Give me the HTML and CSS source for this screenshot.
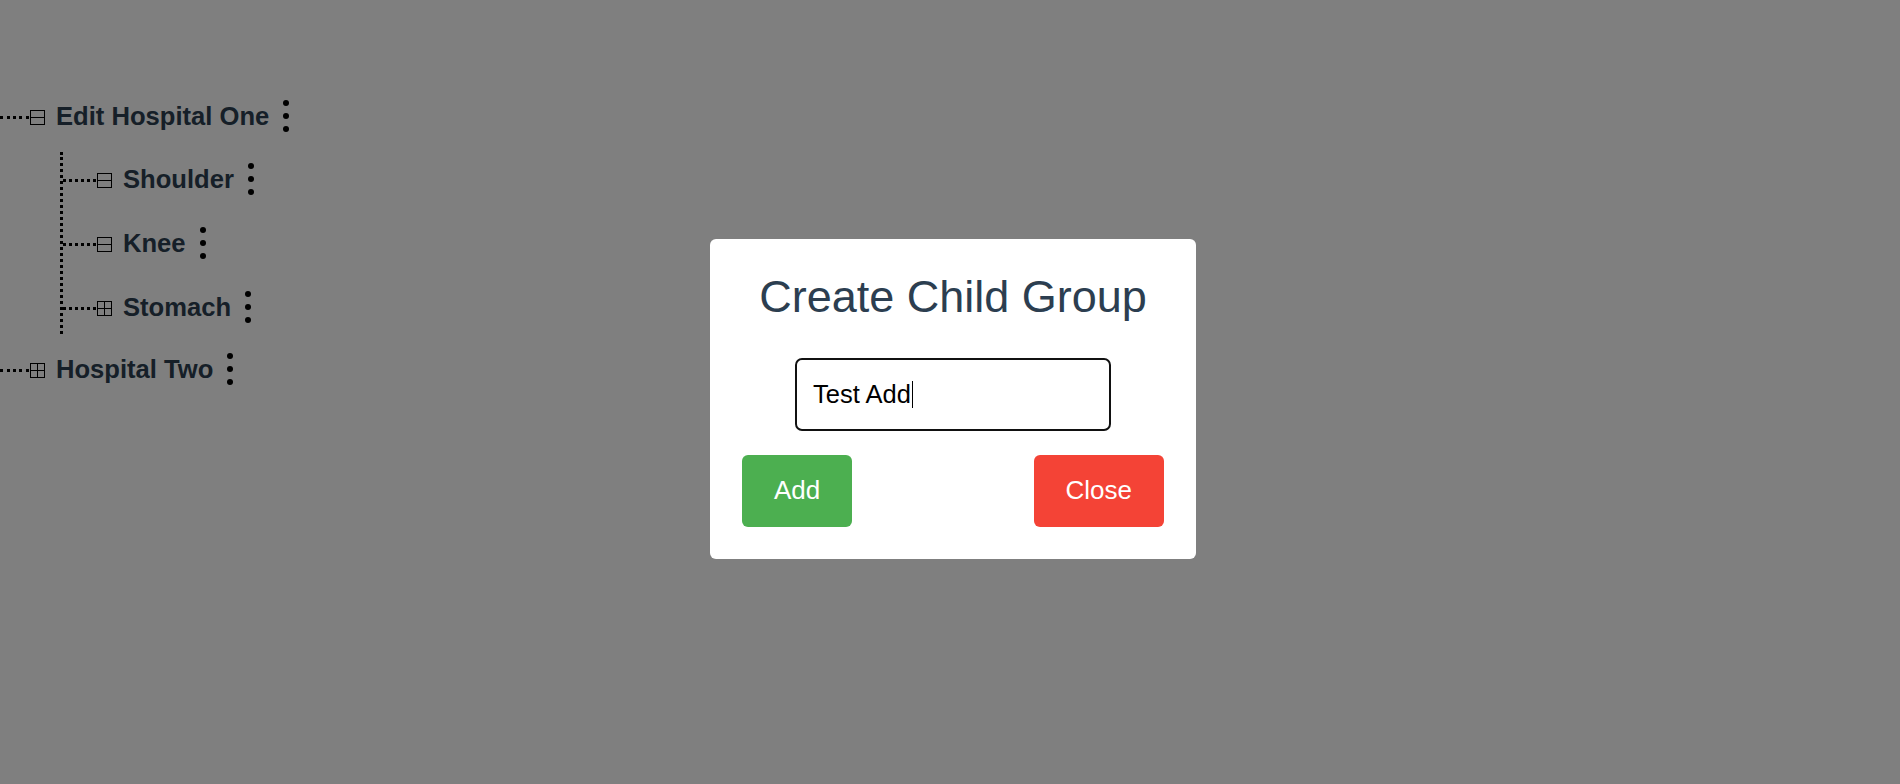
FILE: index.html
```html
<!DOCTYPE html>
<html lang="en">
<head>
<meta charset="utf-8">
<title>Groups</title>
<link rel="stylesheet" href="styles.css">
</head>
<body>
<div class="app">
  <ul class="tree">
    <li class="node">
      <div class="row">
        <span class="connector"></span>
        <svg class="toggle" width="15" height="15" viewBox="0 0 15 15"><rect x="0.5" y="0.5" width="14" height="14" fill="none" stroke="#000"/><line x1="0.5" y1="7.5" x2="14.5" y2="7.5" stroke="#000"/></svg>
        <span class="label">Edit Hospital One</span>
        <span class="kebab"><i></i><i></i><i></i></span>
      </div>
      <ul class="children">
        <li class="node">
          <div class="row">
            <span class="connector"></span>
            <svg class="toggle" width="15" height="15" viewBox="0 0 15 15"><rect x="0.5" y="0.5" width="14" height="14" fill="none" stroke="#000"/><line x1="0.5" y1="7.5" x2="14.5" y2="7.5" stroke="#000"/></svg>
            <span class="label">Shoulder</span>
            <span class="kebab"><i></i><i></i><i></i></span>
          </div>
        </li>
        <li class="node">
          <div class="row">
            <span class="connector"></span>
            <svg class="toggle" width="15" height="15" viewBox="0 0 15 15"><rect x="0.5" y="0.5" width="14" height="14" fill="none" stroke="#000"/><line x1="0.5" y1="7.5" x2="14.5" y2="7.5" stroke="#000"/></svg>
            <span class="label">Knee</span>
            <span class="kebab"><i></i><i></i><i></i></span>
          </div>
        </li>
        <li class="node">
          <div class="row">
            <span class="connector"></span>
            <svg class="toggle" width="15" height="15" viewBox="0 0 15 15"><rect x="0.5" y="0.5" width="14" height="14" fill="none" stroke="#000"/><line x1="0.5" y1="7.5" x2="14.5" y2="7.5" stroke="#000"/><line x1="7.5" y1="0.5" x2="7.5" y2="14.5" stroke="#000"/></svg>
            <span class="label">Stomach</span>
            <span class="kebab"><i></i><i></i><i></i></span>
          </div>
        </li>
      </ul>
    </li>
    <li class="node">
      <div class="row">
        <span class="connector"></span>
        <svg class="toggle" width="15" height="15" viewBox="0 0 15 15"><rect x="0.5" y="0.5" width="14" height="14" fill="none" stroke="#000"/><line x1="0.5" y1="7.5" x2="14.5" y2="7.5" stroke="#000"/><line x1="7.5" y1="0.5" x2="7.5" y2="14.5" stroke="#000"/></svg>
        <span class="label">Hospital Two</span>
        <span class="kebab"><i></i><i></i><i></i></span>
      </div>
    </li>
  </ul>
</div>

<div class="overlay">
  <div class="modal" role="dialog" aria-labelledby="modal-title">
    <h2 class="modal-title" id="modal-title">Create Child Group</h2>
    <div class="text-input" role="textbox">Test Add<span class="caret"></span></div>
    <div class="actions">
      <button class="btn btn-add" type="button">Add</button>
      <button class="btn btn-close" type="button">Close</button>
    </div>
  </div>
</div>
</body>
</html>
```

FILE: styles.css
```css
html, body {
  margin: 0;
  padding: 0;
  background: #ffffff;
}

body {
  font-family: "Liberation Sans", Arial, Helvetica, sans-serif;
  color: #2c3e50;
  width: 1900px;
  height: 784px;
  overflow: hidden;
}

.app {
  padding-top: 97px;
}

.tree {
  list-style: none;
  margin: 0;
  padding: 0;
}

.tree > .node + .node {
  margin-top: 16px;
}

.row {
  display: flex;
  align-items: center;
  height: 41px;
}

.connector {
  width: 29px;
  margin-right: 1px;
  border-top: 3px dotted #000;
  height: 0;
}

.children {
  list-style: none;
  margin: 14px 0 0 60px;
  padding: 8px 0 5px 0;
  border-left: 3px dotted #000;
}

.children > .node + .node {
  margin-top: 23px;
}

.children .connector {
  width: 33px;
  margin-right: 1px;
}

.toggle {
  display: block;
  flex: none;
}

.label {
  margin-left: 11px;
  margin-top: -2px;
  font-size: 25.6px;
  font-weight: bold;
  color: #2c3e50;
  white-space: nowrap;
}

.kebab {
  display: flex;
  flex-direction: column;
  gap: 7px;
  margin-left: 14px;
  margin-top: -3px;
}

.kebab i {
  display: block;
  width: 6px;
  height: 6px;
  border-radius: 50%;
  background: #000;
}

.overlay {
  position: fixed;
  inset: 0;
  background: rgba(0, 0, 0, 0.5);
  display: flex;
  align-items: center;
  justify-content: center;
  padding: 13px 0 0 6px;
  box-sizing: border-box;
}

.modal {
  width: 486px;
  box-sizing: border-box;
  background: #ffffff;
  border-radius: 6px;
  padding: 32px;
}

.modal-title {
  margin: 0;
  font-size: 45px;
  line-height: 51px;
  font-weight: normal;
  text-align: center;
  color: #2c3e50;
}

.text-input {
  width: 316px;
  height: 73px;
  box-sizing: border-box;
  margin: 36px auto 24px;
  border: 2px solid #111;
  border-radius: 7px;
  padding-left: 16px;
  display: flex;
  align-items: center;
  font-size: 25.5px;
  color: #000;
}

.caret {
  display: inline-block;
  width: 1px;
  height: 27px;
  background: #000;
  margin-left: 1px;
}

.actions {
  display: flex;
  justify-content: space-between;
}

.btn {
  height: 72px;
  padding: 0 32px;
  border: none;
  border-radius: 6px;
  font-family: "Liberation Sans", Arial, Helvetica, sans-serif;
  font-size: 26px;
  color: #ffffff;
  cursor: pointer;
}

.btn-add {
  background: #4caf50;
}

.btn-close {
  background: #f44336;
}
```
